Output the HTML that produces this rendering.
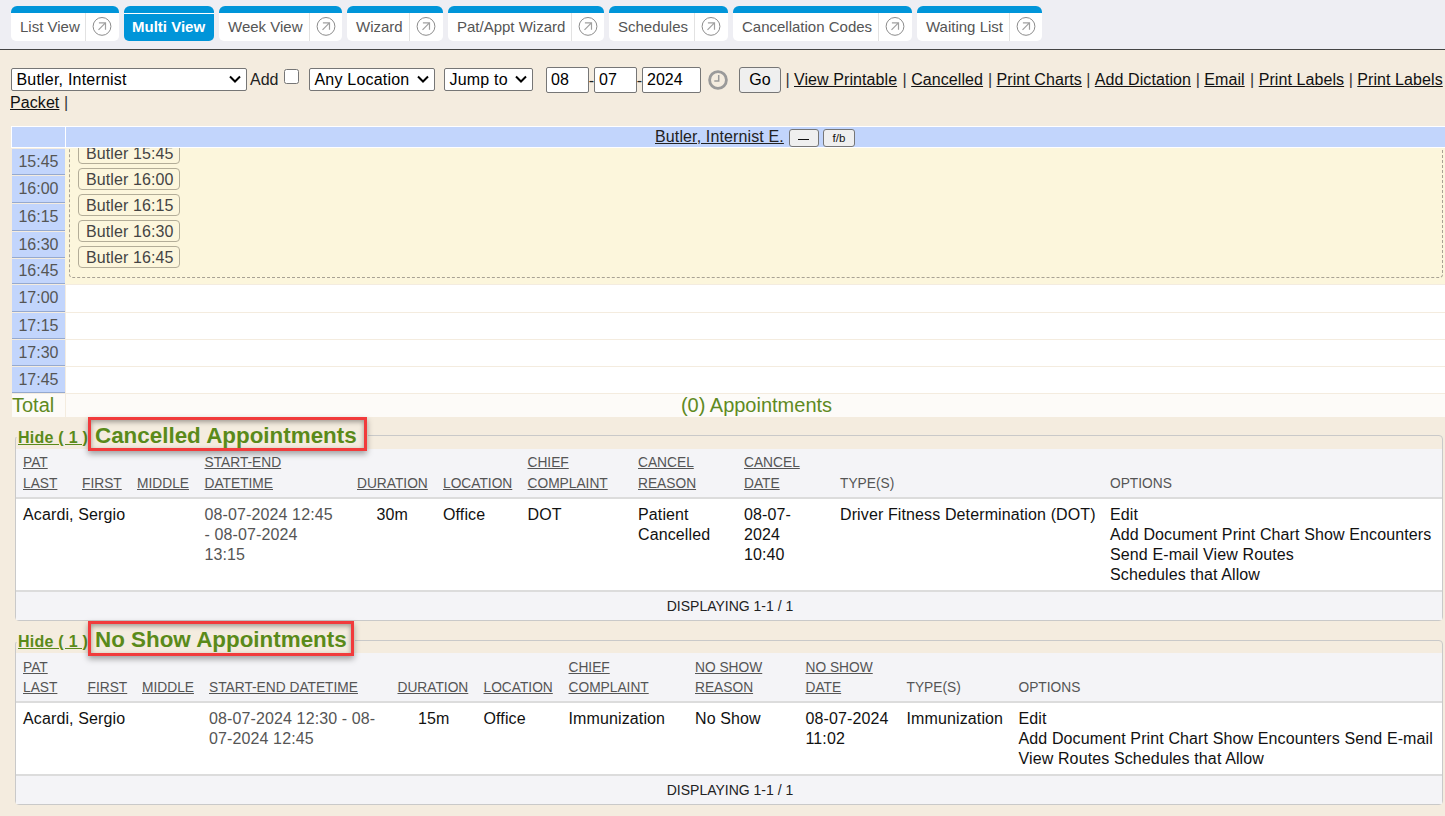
<!DOCTYPE html>
<html><head><meta charset="utf-8">
<style>
*{box-sizing:border-box}
html,body{margin:0;padding:0}
body{width:1445px;height:816px;overflow:hidden;background:#f4ecdf;font-family:"Liberation Sans",sans-serif;font-size:16px;color:#222;position:relative}
.a{position:absolute;white-space:nowrap}
#tabbar{position:absolute;left:0;top:0;width:1445px;height:50px;background:#eeeef3;border-bottom:1px solid #444}
.tab{position:absolute;top:6px;height:35px;background:#fff;border-top:7px solid #0095d9;border-radius:6px 6px 5px 5px;font-size:15px;color:#555;white-space:nowrap}
.tab .t{position:absolute;top:5px;left:9px}
.tab .sep{position:absolute;top:0;bottom:0;width:1px;background:#e2e2e2}
.tab svg.ic{position:absolute;top:3px}
.tab.act{background:#0095d9;color:#fff;font-weight:bold}
.tab.act:before{content:"";position:absolute;left:0;right:0;top:0;height:1px;background:#fff}
/* toolbar */
.sel{position:absolute;top:68px;height:23px;background:#fff;border:1px solid #767676;border-radius:2px;color:#000}
.sel .t{position:absolute;left:4.5px;top:1px;line-height:19px;letter-spacing:0.2px}
.sel svg{position:absolute;right:5px;top:5.5px}
.inp{position:absolute;top:67px;height:26px;background:#fff;border:1px solid #767676;border-radius:2px;color:#000;padding-left:4px;line-height:23px}
.lnk{position:absolute;top:70px;color:#111;text-decoration:underline;white-space:nowrap;letter-spacing:0.08px}
.pipe{position:absolute;top:70px;color:#333;white-space:pre}
/* grid */
.hd{position:absolute;background:#c2d5fc}
.tc{position:absolute;left:12px;width:53px;background:#c2d5fc;border-bottom:1px solid #95a9cf;color:#555;text-align:center;font-size:16px}
.wc{position:absolute;left:66px;width:1379px;background:#fff}
.btn{position:absolute;left:78px;width:102px;height:22px;border:1px solid #b3ad98;border-radius:4px;color:#444;font-size:16px;line-height:22px;padding-left:7px;letter-spacing:0.1px}
/* fieldsets */
.fs{position:absolute;left:15px;width:1428px;border:1px solid #c9c9c9;border-radius:4px}
.hide{position:absolute;z-index:3;letter-spacing:0.25px;left:18px;color:#5a8a1a;font-weight:bold;text-decoration:underline;font-size:16px}
.leg{position:absolute;z-index:3;left:88px;height:34px;border:3px solid #f13b3c;box-shadow:inset 0 2px 5px rgba(0,0,0,.35),0 3px 6px rgba(0,0,0,.35);background:#f4ecdf;color:#5a8a1a;font-weight:bold;font-size:22.4px;line-height:27px;padding:2px 0 0 4px}
.th{position:absolute;left:16px;width:1426px;background:#f4f4f7;border-bottom:2px solid #dcdcdc}
.tr{position:absolute;left:16px;width:1426px;background:#fff;border-bottom:2px solid #dcdcdc}
.tf{position:absolute;left:16px;width:1426px;padding-left:2px;background:#f4f4f7;font-size:14px;color:#222;text-align:center}
.h{position:absolute;font-size:13.75px;color:#555;text-decoration:underline;white-space:nowrap}
.hn{text-decoration:none}
.d{position:absolute;font-size:16px;color:#111;line-height:20px;white-space:nowrap;letter-spacing:0.12px}
.g{color:#555}
</style></head>
<body>
<div id="tabbar">
  <div class="tab" style="left:11px;width:108px"><span class="t">List View</span><span class="sep" style="left:74px"></span><svg class="ic" style="left:81px" width="20" height="21" viewBox="0 0 20 21"><circle cx="10" cy="10.4" r="8.9" stroke="#8c8c8c" stroke-width="1" fill="none"/><path d="M6.5 13.8 L13.4 6.9 M6.9 6.9 H13.5 V13.8" stroke="#a0a0a0" stroke-width="1.2" fill="none"/></svg></div>
  <div class="tab act" style="left:124px;width:90px"><span class="t" style="left:8px">Multi View</span></div>
  <div class="tab" style="left:219px;width:123px"><span class="t">Week View</span><span class="sep" style="left:90px"></span><svg class="ic" style="left:97px" width="20" height="21" viewBox="0 0 20 21"><circle cx="10" cy="10.4" r="8.9" stroke="#8c8c8c" stroke-width="1" fill="none"/><path d="M6.5 13.8 L13.4 6.9 M6.9 6.9 H13.5 V13.8" stroke="#a0a0a0" stroke-width="1.2" fill="none"/></svg></div>
  <div class="tab" style="left:347px;width:96px"><span class="t">Wizard</span><span class="sep" style="left:62px"></span><svg class="ic" style="left:69px" width="20" height="21" viewBox="0 0 20 21"><circle cx="10" cy="10.4" r="8.9" stroke="#8c8c8c" stroke-width="1" fill="none"/><path d="M6.5 13.8 L13.4 6.9 M6.9 6.9 H13.5 V13.8" stroke="#a0a0a0" stroke-width="1.2" fill="none"/></svg></div>
  <div class="tab" style="left:448px;width:156px"><span class="t">Pat/Appt Wizard</span><span class="sep" style="left:123px"></span><svg class="ic" style="left:130px" width="20" height="21" viewBox="0 0 20 21"><circle cx="10" cy="10.4" r="8.9" stroke="#8c8c8c" stroke-width="1" fill="none"/><path d="M6.5 13.8 L13.4 6.9 M6.9 6.9 H13.5 V13.8" stroke="#a0a0a0" stroke-width="1.2" fill="none"/></svg></div>
  <div class="tab" style="left:609px;width:119px"><span class="t">Schedules</span><span class="sep" style="left:85px"></span><svg class="ic" style="left:92px" width="20" height="21" viewBox="0 0 20 21"><circle cx="10" cy="10.4" r="8.9" stroke="#8c8c8c" stroke-width="1" fill="none"/><path d="M6.5 13.8 L13.4 6.9 M6.9 6.9 H13.5 V13.8" stroke="#a0a0a0" stroke-width="1.2" fill="none"/></svg></div>
  <div class="tab" style="left:733px;width:179px"><span class="t">Cancellation Codes</span><span class="sep" style="left:145px"></span><svg class="ic" style="left:152px" width="20" height="21" viewBox="0 0 20 21"><circle cx="10" cy="10.4" r="8.9" stroke="#8c8c8c" stroke-width="1" fill="none"/><path d="M6.5 13.8 L13.4 6.9 M6.9 6.9 H13.5 V13.8" stroke="#a0a0a0" stroke-width="1.2" fill="none"/></svg></div>
  <div class="tab" style="left:917px;width:125px"><span class="t">Waiting List</span><span class="sep" style="left:92px"></span><svg class="ic" style="left:99px" width="20" height="21" viewBox="0 0 20 21"><circle cx="10" cy="10.4" r="8.9" stroke="#8c8c8c" stroke-width="1" fill="none"/><path d="M6.5 13.8 L13.4 6.9 M6.9 6.9 H13.5 V13.8" stroke="#a0a0a0" stroke-width="1.2" fill="none"/></svg></div>
</div>


<div class="sel" style="left:11px;width:236px"><span class="t">Butler, Internist</span><svg width="12" height="8" viewBox="0 0 12 8"><path d="M1 1.5 L6 6.5 L11 1.5" stroke="#000" stroke-width="2" fill="none"/></svg></div>
<div class="a" style="left:250px;top:70px;line-height:20px;color:#222">Add</div>
<div class="a" style="left:284px;top:69px;width:15px;height:15px;background:#fff;border:1px solid #767676;border-radius:2.5px"></div>
<div class="sel" style="left:309px;width:126px"><span class="t">Any Location</span><svg width="12" height="8" viewBox="0 0 12 8"><path d="M1 1.5 L6 6.5 L11 1.5" stroke="#000" stroke-width="2" fill="none"/></svg></div>
<div class="sel" style="left:444px;width:89px"><span class="t">Jump to</span><svg width="12" height="8" viewBox="0 0 12 8"><path d="M1 1.5 L6 6.5 L11 1.5" stroke="#000" stroke-width="2" fill="none"/></svg></div>
<div class="inp" style="left:546px;width:43px">08</div>
<div class="a" style="left:588.7px;top:71px;line-height:20px;color:#222">-</div>
<div class="inp" style="left:594px;width:43px">07</div>
<div class="a" style="left:636.7px;top:71px;line-height:20px;color:#222">-</div>
<div class="inp" style="left:642px;width:59px">2024</div>
<svg class="a" style="left:706px;top:68px" width="24" height="24" viewBox="0 0 24 24"><circle cx="12" cy="12" r="8.4" stroke="#9a9a9a" stroke-width="2.8" fill="none"/><path d="M12.7 7 V13 H8.3" stroke="#9a9a9a" stroke-width="1.5" fill="none"/></svg>
<div class="a" style="left:739px;top:67px;width:42px;height:26px;background:#efefef;border:1px solid #767676;border-radius:3px;color:#000;text-align:center;line-height:23px">Go</div>
<div class="pipe a" style="left:780.95px;line-height:20px"> | </div><div class="lnk" style="left:794px;line-height:20px">View Printable</div>
<div class="pipe a" style="left:898.15px;line-height:20px"> | </div><div class="lnk" style="left:911.2px;line-height:20px">Cancelled</div>
<div class="pipe a" style="left:983.45px;line-height:20px"> | </div><div class="lnk" style="left:996.5px;line-height:20px">Print Charts</div>
<div class="pipe a" style="left:1081.75px;line-height:20px"> | </div><div class="lnk" style="left:1094.8px;line-height:20px">Add Dictation</div>
<div class="pipe a" style="left:1191.25px;line-height:20px"> | </div><div class="lnk" style="left:1204.3px;line-height:20px">Email</div>
<div class="pipe a" style="left:1245.65px;line-height:20px"> | </div><div class="lnk" style="left:1258.7px;line-height:20px">Print Labels</div>
<div class="pipe a" style="left:1344.25px;line-height:20px"> | </div><div class="lnk" style="left:1357.3px;line-height:20px">Print Labels</div>
<div class="lnk" style="left:10px;top:93px;line-height:20px">Packet</div><div class="pipe a" style="left:59.5px;top:93px;line-height:20px;color:#333"> |</div>


<div class="a" style="left:11px;top:126px;width:1434px;height:22px;background:#fff"></div>
<div class="hd" style="left:12px;top:127px;width:53px;height:20px"></div>
<div class="hd" style="left:66px;top:127px;width:1379px;height:20px"></div>
<div class="a" style="left:655px;top:127px;line-height:19px;color:#222;text-decoration:underline;letter-spacing:0.13px">Butler, Internist E.</div>
<div class="a" style="left:789px;top:129px;width:30px;height:18px;background:#efefef;border:1px solid #767676;border-radius:3px"><div style="position:absolute;left:8px;top:9px;width:11px;height:1.3px;background:#111"></div></div>
<div class="a" style="left:823px;top:129px;width:32px;height:18px;background:#efefef;border:1px solid #767676;border-radius:3px;font-size:11.5px;color:#111;text-align:center;line-height:16px">f/b</div>
<div class="tc" style="top:149px;height:26px;line-height:25px">15:45</div>
<div class="tc" style="top:176px;height:27px;line-height:26px">16:00</div>
<div class="tc" style="top:204px;height:27px;line-height:26px">16:15</div>
<div class="tc" style="top:232px;height:26px;line-height:25px">16:30</div>
<div class="tc" style="top:259px;height:25px;line-height:24px">16:45</div>
<div class="tc" style="top:285px;height:27px;line-height:26px">17:00</div>
<div class="wc" style="top:285px;height:27px"></div>
<div class="tc" style="top:313px;height:26px;line-height:25px">17:15</div>
<div class="wc" style="top:313px;height:26px"></div>
<div class="tc" style="top:340px;height:26px;line-height:25px">17:30</div>
<div class="wc" style="top:340px;height:26px"></div>
<div class="tc" style="top:367px;height:26px;line-height:25px">17:45</div>
<div class="wc" style="top:367px;height:26px"></div>
<div class="a" style="left:65px;top:148px;width:1380px;height:136px;background:#fcf6dc;overflow:hidden"><div style="position:absolute;left:4px;top:-19px;width:1374px;height:149px;border:1px dashed #a8a294;border-radius:4px"></div><div class="btn" style="left:13px;top:-6px">Butler 15:45</div><div class="btn" style="left:13px;top:20px">Butler 16:00</div><div class="btn" style="left:13px;top:46px">Butler 16:15</div><div class="btn" style="left:13px;top:72px">Butler 16:30</div><div class="btn" style="left:13px;top:98px">Butler 16:45</div></div>
<div class="a" style="left:12px;top:394px;width:53px;height:23px;background:#fdfbf8"></div>
<div class="a" style="left:66px;top:394px;width:1379px;height:23px;background:#fdfbf8"></div>
<div class="a" style="left:12px;top:393px;font-size:20px;line-height:24px;color:#5f8a1f">Total</div>
<div class="a" style="left:66px;top:393px;width:1379px;padding-left:2px;text-align:center;font-size:20px;line-height:24px;color:#5f8a1f">(0) Appointments</div>

<div class="fs" style="top:435px;height:186px"></div>
<div class="a" style="left:14px;top:433px;width:354px;height:4px;background:#f4ecdf"></div>
<div class="hide" style="top:428px;line-height:20px">Hide ( 1 )</div>
<div class="leg" style="top:417px;width:279px">Cancelled Appointments</div>
<div class="th" style="top:449px;height:50px"></div>
<div class="tr" style="top:499px;height:93px"></div>
<div class="tf" style="top:592px;height:28px;line-height:28px">DISPLAYING 1-1 / 1</div>
<div class="h" style="left:23px;top:455px;line-height:16px">PAT</div>
<div class="h" style="left:23px;top:476px;line-height:16px">LAST</div>
<div class="h" style="left:82px;top:476px;line-height:16px">FIRST</div>
<div class="h" style="left:137px;top:476px;line-height:16px">MIDDLE</div>
<div class="h" style="left:204.5px;top:455px;line-height:16px">START-END</div>
<div class="h" style="left:204.5px;top:476px;line-height:16px">DATETIME</div>
<div class="h" style="left:357px;top:476px;line-height:16px">DURATION</div>
<div class="h" style="left:443px;top:476px;line-height:16px">LOCATION</div>
<div class="h" style="left:527.5px;top:455px;line-height:16px">CHIEF</div>
<div class="h" style="left:527.5px;top:476px;line-height:16px">COMPLAINT</div>
<div class="h" style="left:638px;top:455px;line-height:16px">CANCEL</div>
<div class="h" style="left:638px;top:476px;line-height:16px">REASON</div>
<div class="h" style="left:744px;top:455px;line-height:16px">CANCEL</div>
<div class="h" style="left:744px;top:476px;line-height:16px">DATE</div>
<div class="h hn" style="left:840px;top:476px;line-height:16px">TYPE(S)</div>
<div class="h hn" style="left:1110px;top:476px;line-height:16px">OPTIONS</div>
<div class="d" style="left:23px;top:505px">Acardi, Sergio</div>
<div class="d g" style="left:204.5px;top:505px">08-07-2024 12:45<br>- 08-07-2024<br>13:15</div>
<div class="d" style="left:376.5px;top:505px">30m</div>
<div class="d" style="left:443px;top:505px">Office</div>
<div class="d" style="left:527.5px;top:505px">DOT</div>
<div class="d" style="left:638px;top:505px">Patient<br>Cancelled</div>
<div class="d" style="left:744px;top:505px">08-07-<br>2024<br>10:40</div>
<div class="d" style="left:840px;top:505px">Driver Fitness Determination (DOT)</div>
<div class="d" style="left:1110px;top:505px">Edit<br>Add Document Print Chart Show Encounters<br>Send E-mail View Routes<br>Schedules that Allow</div>

<div class="fs" style="top:640px;height:165px"></div>
<div class="a" style="left:14px;top:638px;width:341px;height:4px;background:#f4ecdf"></div>
<div class="hide" style="top:632px;line-height:20px">Hide ( 1 )</div>
<div class="leg" style="top:621px;height:35px;width:266px">No Show Appointments</div>
<div class="th" style="top:653px;height:50px"></div>
<div class="tr" style="top:703px;height:73px"></div>
<div class="tf" style="top:776px;height:28px;line-height:28px">DISPLAYING 1-1 / 1</div>
<div class="h" style="left:23px;top:660px;line-height:16px">PAT</div>
<div class="h" style="left:23px;top:680px;line-height:16px">LAST</div>
<div class="h" style="left:87.5px;top:680px;line-height:16px">FIRST</div>
<div class="h" style="left:142px;top:680px;line-height:16px">MIDDLE</div>
<div class="h" style="left:209px;top:680px;line-height:16px">START-END DATETIME</div>
<div class="h" style="left:397.5px;top:680px;line-height:16px">DURATION</div>
<div class="h" style="left:483.5px;top:680px;line-height:16px">LOCATION</div>
<div class="h" style="left:568.5px;top:660px;line-height:16px">CHIEF</div>
<div class="h" style="left:568.5px;top:680px;line-height:16px">COMPLAINT</div>
<div class="h" style="left:695px;top:660px;line-height:16px">NO SHOW</div>
<div class="h" style="left:695px;top:680px;line-height:16px">REASON</div>
<div class="h" style="left:805.5px;top:660px;line-height:16px">NO SHOW</div>
<div class="h" style="left:805.5px;top:680px;line-height:16px">DATE</div>
<div class="h hn" style="left:906.5px;top:680px;line-height:16px">TYPE(S)</div>
<div class="h hn" style="left:1018.5px;top:680px;line-height:16px">OPTIONS</div>
<div class="d" style="left:23px;top:709px">Acardi, Sergio</div>
<div class="d g" style="left:209px;top:709px">08-07-2024 12:30 - 08-<br>07-2024 12:45</div>
<div class="d" style="left:418px;top:709px">15m</div>
<div class="d" style="left:483.5px;top:709px">Office</div>
<div class="d" style="left:568.5px;top:709px">Immunization</div>
<div class="d" style="left:695px;top:709px">No Show</div>
<div class="d" style="left:805.5px;top:709px">08-07-2024<br>11:02</div>
<div class="d" style="left:906.5px;top:709px">Immunization</div>
<div class="d" style="left:1018.5px;top:709px">Edit<br>Add Document Print Chart Show Encounters Send E-mail<br>View Routes Schedules that Allow</div>

</body></html>
